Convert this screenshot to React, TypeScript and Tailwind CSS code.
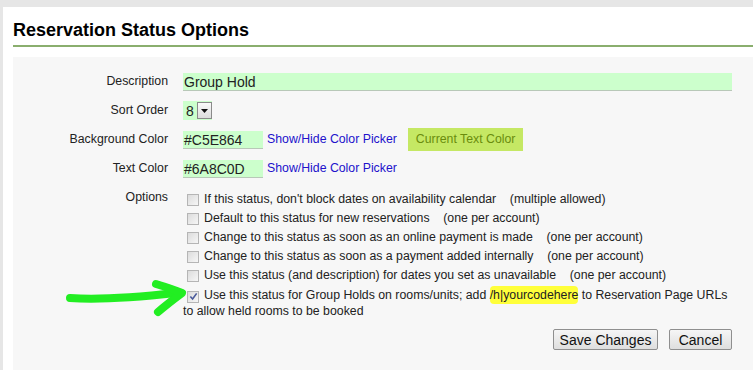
import React from "react";

const options: { text: string; note: string; checked?: boolean }[] = [
  { text: "If this status, don't block dates on availability calendar", note: "(multiple allowed)" },
  { text: "Default to this status for new reservations", note: "(one per account)" },
  { text: "Change to this status as soon as an online payment is made", note: "(one per account)" },
  { text: "Change to this status as soon as a payment added internally", note: "(one per account)" },
  { text: "Use this status (and description) for dates you set as unavailable", note: "(one per account)" },
];

function Box({ checked }: { checked?: boolean }) {
  return (
    <span className="inline-flex w-[12px] h-[12px] border border-[#b5b5b5] bg-gradient-to-br from-[#dcdcdc] to-[#f6f6f6] items-center justify-center align-[-2px] shrink-0">
      {checked && (
        <svg width="9" height="9" viewBox="0 0 10 10">
          <path d="M1.5 5 L4 7.8 L8.5 1.5" stroke="#4a5a9a" strokeWidth="1.8" fill="none" />
        </svg>
      )}
    </span>
  );
}

export default function App() {
  return (
    <div className="w-[753px] h-[370px] bg-[#e6e6e6] pt-[7px] pl-[3px] overflow-hidden relative font-['Liberation_Sans',Arial,sans-serif] text-[12.3px] text-[#222]">
      <div className="bg-white h-full pl-[10px] pt-[12px] flex flex-col">
        <h1 className="text-[18px] font-bold text-black leading-[22px] pb-[4px] border-b-2 border-[#8aae6e]">
          Reservation Status Options
        </h1>
        <div className="mt-[10px] bg-[#f7f7f7] flex-1 pt-[10px]">
          <div className="grid grid-cols-[155px_1fr] gap-x-[15px] pr-[21px]">
            <div className="text-right h-[29px] flex items-center justify-end">Description</div>
            <div className="h-[29px] flex items-center">
              <div className="w-full h-[18px] bg-[#ccffcc] border-b border-[#b8c8b8] text-[14px] leading-[18px] pl-[1px] text-[#222]">Group Hold</div>
            </div>

            <div className="text-right h-[29px] flex items-center justify-end">Sort Order</div>
            <div className="h-[29px] flex items-center">
              <div className="flex items-center h-[19px] bg-[#ccffcc]">
                <span className="text-[14px] px-[3px] leading-[18px]">8</span>
                <span className="w-[15px] h-[17px] border border-[#8a8a8a] bg-gradient-to-b from-[#fafafa] to-[#dcdcdc] flex items-center justify-center">
                  <svg width="7" height="4" viewBox="0 0 7 4"><path d="M0 0 H7 L3.5 4 Z" fill="#111" /></svg>
                </span>
              </div>
            </div>

            <div className="text-right h-[29px] flex items-center justify-end">Background Color</div>
            <div className="h-[29px] flex items-center gap-[4px]">
              <div className="w-[80px] h-[18px] bg-[#ccffcc] border-b border-[#b8c8b8] text-[14px] leading-[18px] pl-[1px]">#C5E864</div>
              <span className="text-[#2211cc]">Show/Hide Color Picker</span>
              <span className="ml-[7px] h-[23px] px-[8px] bg-[#c5e864] text-[#6a8c0d] flex items-center">Current Text Color</span>
            </div>

            <div className="text-right h-[29px] flex items-center justify-end">Text Color</div>
            <div className="h-[29px] flex items-center gap-[4px]">
              <div className="w-[80px] h-[18px] bg-[#ccffcc] border-b border-[#b8c8b8] text-[14px] leading-[18px] pl-[1px]">#6A8C0D</div>
              <span className="text-[#2211cc]">Show/Hide Color Picker</span>
            </div>

            <div className="text-right pt-[5px]">Options</div>
            <div className="pt-[7px]">
              {options.map((o) => (
                <div key={o.text} className="h-[19px] flex items-center pl-[4px]">
                  <Box />
                  <span className="ml-[5px] whitespace-pre">{o.text}{"    "}{o.note}</span>
                </div>
              ))}
              <div className="leading-[16px] pt-[2px] whitespace-nowrap">
                <span className="pl-[4px] inline-block"><Box checked /></span>
                <span className="ml-[5px]">Use this status for Group Holds on rooms/units; add </span>
                <span className="bg-[#ffff3a] rounded-[4px] py-[2px]">/h|yourcodehere</span>
                <span> to Reservation Page URLs</span>
                <br />
                <span>to allow held rooms to be booked</span>
              </div>
              <div className="flex justify-end gap-[11px] mt-[10px]">
                <button className="h-[21px] w-[105px] border border-[#8f8f8f] rounded-[2px] bg-gradient-to-b from-[#f6f6f6] to-[#dedede] text-[14px] text-[#111]">Save Changes</button>
                <button className="h-[21px] w-[63px] border border-[#8f8f8f] rounded-[2px] bg-gradient-to-b from-[#f6f6f6] to-[#dedede] text-[14px] text-[#111]">Cancel</button>
              </div>
            </div>
          </div>
        </div>
      </div>
      <svg className="absolute left-0 top-0 pointer-events-none" width="753" height="370">
        <path d="M70 298 C100 300 140 297 176 293" stroke="#22ee22" strokeWidth="8" strokeLinecap="round" fill="none" />
        <path d="M156 284 C166 287 175 290 182 293 C174 299 165 306 158 312" stroke="#22ee22" strokeWidth="8" strokeLinecap="round" strokeLinejoin="round" fill="none" />
      </svg>
    </div>
  );
}
